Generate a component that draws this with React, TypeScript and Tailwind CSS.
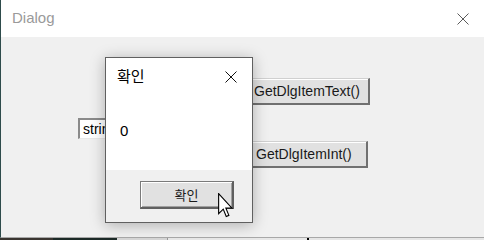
import React from "react";

const sans = { fontFamily: '"Liberation Sans", Arial, sans-serif' };
const kr = { fontFamily: '"Noto Sans CJK KR", "Noto Sans", sans-serif' };

const CloseIcon = ({ size, color }: { size: number; color: string }) => (
  <svg width={size} height={size} viewBox="0 0 12 12" fill="none">
    <path d="M0.5 0.5L11.5 11.5M11.5 0.5L0.5 11.5" stroke={color} strokeWidth="1" />
  </svg>
);

const Cursor = () => (
  <svg width="15" height="25" viewBox="0 0 12 20">
    <path
      d="M0.5 0.5V16.5L4.2 12.9L6.6 18.8L8.7 17.9L6.3 12.1H11.2Z"
      fill="#fff"
      stroke="#000"
      strokeWidth="0.9"
      strokeLinejoin="miter"
    />
  </svg>
);

// 클래식 버튼 (Win32 style)
const ClassicButton = ({ label, className }: { label: string; className: string }) => (
  <div
    className={`flex items-center justify-start bg-[#e1e1e1] border-t border-l border-[#d0d0d0] border-r-2 border-b-2 border-r-[#707070] border-b-[#707070] shadow-[inset_1px_1px_0_#ffffff] text-[14px] text-[#1a1a1a] ${className}`}
    style={sans}
  >
    {label}
  </div>
);

export default function App() {
  return (
    <div className="w-[484px] h-[240px] overflow-hidden flex flex-col bg-[#1e2b28]">
      <div className="relative h-[238px] flex flex-col border-l border-[#2e4b4b] border-b border-b-[#a8a8a8]">
        {/* title bar */}
        <div className="h-[37px] bg-white flex items-center justify-between pl-[11px] pr-[15px]">
          <span className="text-[15px] text-[#9a9a9a] pb-[1px]" style={sans}>
            Dialog
          </span>
          <CloseIcon size={12} color="#5a5a5a" />
        </div>

        {/* client area */}
        <div className="relative flex-1 bg-[#f0f0f0] flex flex-col pt-[41px]">
          <ClassicButton label="GetDlgItemText()" className="self-end mr-[114px] w-[122px] h-[27px] pl-[5px]" />

          <div
            className="mt-[13px] ml-[77px] w-[150px] h-[21px] bg-white border-t-2 border-l-2 border-t-[#8a8a8a] border-l-[#8a8a8a] border-r border-b border-r-[#e8e8e8] border-b-[#e8e8e8] flex items-center pl-[3px] text-[14px] text-black"
            style={sans}
          >
            string
          </div>

          <ClassicButton label="GetDlgItemInt()" className="self-end mt-[2px] mr-[116px] w-[120px] h-[27px] pl-[7px]" />

          {/* message box */}
          <div className="absolute left-[104px] top-[20px] w-[148px] h-[166px] border border-[#606060] bg-[#f0f0f0] flex flex-col shadow-[0_2px_14px_rgba(0,0,0,0.28)]">
            <div className="bg-white h-[112px] flex flex-col">
              <div className="flex items-center justify-between pl-[11px] pr-[15px] pt-[9px]">
                <span className="text-[15px] text-black leading-[20px] -mt-[1px]" style={kr}>
                  확인
                </span>
                <CloseIcon size={12} color="#111" />
              </div>
              <div className="pl-[14px] pt-[34px] text-[15px] text-black" style={sans}>
                0
              </div>
            </div>
            <div className="flex-1 flex justify-end pr-[18px] pt-[11px]">
              <div
                className="w-[94px] h-[28px] flex items-center justify-center bg-[#e1e1e1] border-t border-l border-[#7a7a7a] border-r-2 border-b-2 border-r-[#606060] border-b-[#606060] shadow-[inset_1px_1px_0_#ffffff,inset_-1px_-1px_0_#a0a0a0] text-[13px] text-[#1a1a1a]"
                style={kr}
              >
                확인
              </div>
            </div>
          </div>

          {/* mouse pointer */}
          <div className="absolute left-[217px] top-[156px]">
            <Cursor />
          </div>
        </div>
      </div>

      {/* desktop strip behind the window */}
      <div className="flex-1 flex">
        <div className="w-[53px] bg-[#3a3530]" />
        <div className="w-[64px] bg-[#1c2a27]" />
        <div className="w-[50px] bg-[#d6d6d6]" />
        <div className="w-[140px] bg-[#e8e8e8] border-l border-[#999]" />
        <div className="w-[2px] bg-black" />
        <div className="flex-1 bg-[#e6e6e6]" />
      </div>
    </div>
  );
}
